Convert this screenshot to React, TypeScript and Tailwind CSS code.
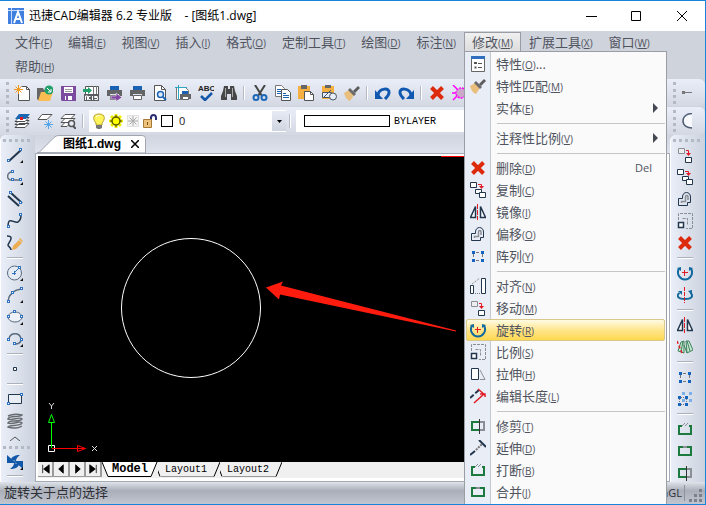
import type { ReactNode } from "react";

const NAVY = "#22364d";
const BLUE = "#1b62b5";
const RED = "#e01b24";
const GREEN = "#1d7a3e";
const GRAY = "#8a8f96";

const corner = <path d="M16 13v3h-3z" fill="#111" />;
const node = (x: number, y: number) => (
  <rect x={x - 1.5} y={y - 1.5} width="2" height="2" fill="#fff" stroke="#2f72c0" key={`${x}-${y}`} />
);
const eraseX = <path d="M2.500 2.500l11 11M13.500 2.500l-11 11" stroke="#dd2a0a" strokeWidth="4" />;
const brush = (
  <>
    <path d="M0 8l5-3 5 5-4 6c-3-1-5-4-6-8z" fill="#eabf7d" />
    <path d="M4 5l2-2 6 6-2 2z" fill="#6b6b6b" />
    <path d="M9 6l5-5 2 2-5 5z" fill="#5c5c5c" />
  </>
);
const printer = (
  <>
    <path d="M4 1h9v4H4z" fill="#1b62b5" />
    <path d="M1 5h15v6h-3V9H4v2H1z" fill="#626466" />
    <path d="M4.500 10.500h8v4h-8z" fill="#fff" stroke="#626466" />
  </>
);

const icons: Record<string, ReactNode> = {
  newFile: (
    <>
      <path d="M7.500 1.500h5l3 3v11h-11v-7" fill="#fff" stroke="#555" />
      <path d="M12.500 1.500v3h3" fill="none" stroke="#555" />
      <path d="M4.500 0v9M0 4.500h9M1.500 1.500l6 6M7.500 1.500l-6 6" stroke="#f09a20" />
    </>
  ),
  open: (
    <>
      <path d="M0 3h6l1 2h6v11H2L0 14z" fill="#666" />
      <path d="M4 7h12l-3 9H1z" fill="#fbbd52" />
      <circle cx="12" cy="5" r="4.500" fill="#22a06b" />
      <path d="M10 3l4 4M14 4v3h-3" stroke="#fff" fill="none" />
    </>
  ),
  save: (
    <>
      <path d="M1 1h15v15H2l-1-1z" fill="#7a4b9e" />
      <path d="M4 2h9v6H4zM5 11h7v4H5z" fill="#fff" />
      <path d="M5 4.500h7M5 6.500h7" stroke="#9a9a9a" />
      <path d="M6 11h2v4H6z" fill="#7a4b9e" />
    </>
  ),
  acis: (
    <>
      <path d="M2.500 1.500h13v8h-13z" fill="#fff" stroke="#555" />
      <path d="M10.500 1v8M13.500 1v8" stroke="#777" />
      <path d="M0 4h5V2l4 3.500L5 9V7H0z" fill="#22a06b" />
      <path d="M1 9h15v7H1z" fill="#5a5c60" />
      <path d="M2.500 15v-4h2v4M7.500 11.500h-2v3h2M9.500 11v4M14.500 11.500h-3v1h3v2h-3" stroke="#fff" fill="none" />
    </>
  ),
  exportPrint: (
    <>
      {printer}
      <path d="M5 11h5V8l6 4.500-6 4V14H5z" fill="#8345a5" stroke="#fff" strokeWidth=".5" />
    </>
  ),
  print: printer,
  preview: (
    <>
      <path d="M2.500 .5h7l4 4v11h-11z" fill="#fff" stroke="#555" />
      <path d="M9.500 .5v4h4" fill="none" stroke="#555" />
      <circle cx="8.500" cy="9.500" r="3" fill="#dbe8f7" stroke={BLUE} strokeWidth="1.500" />
      <path d="M11 12l3 3" stroke={BLUE} strokeWidth="2" />
    </>
  ),
  plot: (
    <>
      <path d="M1.500 2.500h9l3 3v9h-12z" fill="#fff" stroke="#777" />
      <path d="M3.500 0v15M0 2.500h12" stroke="#2fa6bd" />
      <path d="M7 6h6v3H7z" fill={BLUE} />
      <path d="M5 9h11v5H5z" fill="#626466" />
      <path d="M7.500 11.500h6v3h-6z" fill="#fff" stroke="#626466" />
    </>
  ),
  spell: (
    <>
      <path d="M3 11l4 4 7-7" fill="none" stroke="#1156a8" strokeWidth="2.500" />
      <text x="0" y="6" fontSize="8" fontWeight="700" fill="#222" className="font-['Liberation_Sans',sans-serif]">ABC</text>
    </>
  ),
  find: (
    <>
      <path d="M3 1h4v3h2V1h4l1 5 2 5v4h-6V9H6v6H0v-4l2-5z" fill="#474747" />
      <path d="M4.500 3v9M11.500 3v9" stroke="#aaa" />
    </>
  ),
  cut: (
    <>
      <path d="M3 0l7 11M13 0L6 11" stroke="#454545" strokeWidth="2" />
      <circle cx="4" cy="12.500" r="2.500" fill="none" stroke="#1b67b8" strokeWidth="2" />
      <circle cx="12" cy="12.500" r="2.500" fill="none" stroke="#1b67b8" strokeWidth="2" />
    </>
  ),
  copyDoc: (
    <>
      <path d="M.5 .5h6l3 3v8h-9z" fill="#fff" stroke="#777" />
      <path d="M2 4.500h4M2 6.500h4M2 8.500h4" stroke={BLUE} />
      <path d="M6.500 4.500h6l3 3v8h-9z" fill="#fff" stroke="#555" />
      <path d="M8 8.500h3M8 10.500h6M8 12.500h6" stroke={BLUE} />
    </>
  ),
  paste: (
    <>
      <path d="M0 1h12v13H0z" fill="#f5b041" />
      <path d="M3 0h6v4H3z" fill="#666" />
      <path d="M6.500 6.500h6l3 3v6h-9z" fill="#fff" stroke="#555" />
      <path d="M12.500 6.500v3h3" fill="none" stroke="#555" />
    </>
  ),
  pasteShape: (
    <>
      <path d="M1 1h12v13H1z" fill="#f5b041" />
      <path d="M4 0h6v3H4z" fill="#666" />
      <path d="M1.500 7.500h9v5h-9z" fill="#e4ecf5" stroke="#456" />
      <circle cx="12" cy="11.500" r="3.500" fill="#e7eef7" stroke="#456" />
      <path d="M2 13l8-8" stroke="#456" />
    </>
  ),
  brush,
  undo: (
    <>
      <path d="M3 10c1-7 12-8 11-2-.5 3-2 4-4 6" fill="none" stroke="#1159b0" strokeWidth="3" />
      <path d="M0 5v9h8z" fill="#1159b0" />
    </>
  ),
  redo: (
    <>
      <path d="M13 10C12 3 1 2 2 8c.5 3 2 4 4 6" fill="none" stroke="#1159b0" strokeWidth="3" />
      <path d="M16 5v9H8z" fill="#1159b0" />
    </>
  ),
  erase: eraseX,
  purge: (
    <>
      <circle cx="9" cy="8" r="5" fill="#c9a8c9" stroke="#f0f" strokeWidth="1.500" strokeDasharray="2 1" />
      <path d="M1 0l4 4M1 15l4-4M0 8h4" stroke="#f0f" strokeWidth="1.500" />
    </>
  ),
  layers: (
    <>
      <path d="M5 10.500h10l-4 4H1zM5 7.500h10l-4 4H1z" fill="#fff" stroke="#4a4d50" />
      <path d="M5 4.500h10l-4 4H1z" fill="#fff" stroke="#4a4d50" />
      <path d="M5 1h11l-4 5H1z" fill="#1b66b3" />
      <path d="M6 4h3v3H6z" fill={RED} />
    </>
  ),
  layerFreeze: (
    <>
      <path d="M5 1.500h10l-5 5H1z" fill="#fff" stroke="#555" />
      <path d="M11.500 7v9M7 11.500h9M8.500 8.500l6 6M14.500 8.500l-6 6" stroke="#55a5ea" />
    </>
  ),
  layerFind: (
    <>
      <path d="M5 1.500h10l-4 4H1zM5 5.500h10l-4 4H1zM5 9.500h6l-4 4H1z" fill="#fff" stroke="#555" />
      <circle cx="11.500" cy="10.500" r="3" fill="#e8edf5" stroke="#555" strokeWidth="1.500" />
      <path d="M13 13l3 3" stroke="#555" strokeWidth="2" />
    </>
  ),
  bulb: (
    <>
      <path d="M8 1C1 1 2 7 5 10v2h6v-2c3-3 4-9-3-9z" fill="#fff45a" stroke="#b5a12c" />
      <path d="M5 12h6v3l-2 1H7l-2-1z" fill="#777" />
      <path d="M5 4c1-1 2-2 4-1" stroke="#fff" fill="none" />
    </>
  ),
  sun: (
    <>
      <path d="M8 1v14M1 8h14M3 3l10 10M13 3L3 13" stroke="#f2ee00" strokeWidth="3" strokeDasharray="3 8" />
      <path d="M8 2v12M2 8h12" stroke="#555000" />
      <circle cx="8" cy="8" r="4" fill="#ff0" stroke="#5b5600" strokeWidth="1.500" />
    </>
  ),
  frozen: (
    <>
      <path d="M2.500 2.500h11v11h-11z" fill="#f4f4f4" stroke="#c9c9c9" strokeDasharray="1 1" />
      <path d="M8 3v10M3 8h10M4.500 4.500l7 7M11.500 4.500l-7 7" stroke="#aaa" />
    </>
  ),
  lock: (
    <>
      <path d="M9 7V5c0-4 5-4 5 0v2" fill="none" stroke="#2c2c77" strokeWidth="2" />
      <path d="M1.500 6.500h8v8h-8z" fill="#edc27a" stroke="#a77b35" />
      <path d="M5 9h1v3H5z" fill="#78551e" />
    </>
  ),
  line: <><path d="M2 14L14 3" stroke={NAVY} strokeWidth="2" />{node(2, 14)}{node(14, 3)}{corner}</>,
  polyline: <><path d="M6 3C-1 2-1 12 5 11h9" fill="none" stroke="#66727e" strokeWidth="1.500" />{node(6, 3)}{node(6, 11)}{node(14, 11)}{corner}</>,
  doubleLine: <><path d="M4 2l11 10M1 5l11 10" stroke={NAVY} strokeWidth="2" />{node(4, 2)}{node(14, 12)}</>,
  spline: <><path d="M1 14c0-12 6-3 10-5 3-2 3-4 3-7" fill="none" stroke={NAVY} strokeWidth="1.500" />{node(2, 14)}{node(14, 2)}</>,
  freehand: (
    <>
      <path d="M0 1c8 0 2 6 1 9 0 2 3 2 3 5" fill="none" stroke={NAVY} strokeWidth="1.500" />
      <path d="M5 15l1-4 6-6 3 3-6 6z" fill="#edac4e" />
      <path d="M12 4l1-1 3 3-1 1z" fill="#edac4e" />
    </>
  ),
  circle: <><circle cx="7.500" cy="8" r="7" fill="#e4ebf5" stroke="#586a7e" /><path d="M7 8l5-5M5 8.500h4M7.500 6v4" stroke="#2f72c0" />{node(13, 3)}{corner}</>,
  arc: <><path d="M1 14C2 7 7 3 14 2" fill="none" stroke="#586a7e" strokeWidth="1.500" />{node(2, 15)}{node(6, 6)}{node(15, 2)}{corner}</>,
  ellipse: <><ellipse cx="8" cy="8" rx="7" ry="5" fill="#eef2f8" stroke="#586a7e" />{node(2, 8)}{node(8, 3)}{node(15, 8)}{corner}</>,
  ellipseArc: <><path d="M2 8c1-7 11-7 12 0 0 3-2 5-6 5" fill="none" stroke="#586a7e" strokeWidth="1.500" />{node(2, 9)}{node(15, 9)}{node(8, 13)}{corner}</>,
  point: <path d="M6.500 6.500h3v3h-3z" fill="#fff" stroke={NAVY} />,
  rect: <><path d="M1.500 3.500h13v9h-13z" fill="#e9edf4" stroke={NAVY} />{node(2, 13)}{node(15, 4)}</>,
  helix: (
    <path
      d="M1 3c4-2 10-2 14-1-3 3-13 0-14 4 4 2 12-3 14 0-3 4-13 0-14 4 5 2 12-3 14 0-2 4-13 1-14 4 5 2 11 1 14-1"
      fill="none"
      stroke="#686d72"
      strokeWidth="1.500"
    />
  ),
  refresh: (
    <>
      <path d="M4 6c0-3 4-5 9-5-2 2-4 3-4 6zM12 10c0 3-4 5-9 5 2-2 4-3 4-6z" fill="#1159a8" />
      <path d="M0 1v8h9zM16 15V7H7z" fill="#1159a8" />
      {corner}
    </>
  ),
  props: (
    <>
      <path d="M1.500 1.500h13v14h-13z" fill="#fff" stroke="#666" />
      <path d="M1 0h14v3H1z" fill="#2f6fbd" />
      <path d="M4 6h3v2H4zM4.500 10.500h2v2h-2z" fill="#555" />
      <path d="M8 7.500h4M8 11.500h4" stroke="#555" />
    </>
  ),
  copy: (
    <>
      <path d="M.5 .5h6v5h-6z" fill="#fff" stroke={NAVY} />
      <path d="M5.500 7.500h6v4h-6z" fill="#fff" stroke={NAVY} />
      <path d="M9.500 10.500h6v5h-6z" fill="#fff" stroke={NAVY} />
      <path d="M8 2.500h3.500v2" fill="none" stroke={RED} />
      <path d="M9 4h5l-2.500 3z" fill={RED} />
    </>
  ),
  mirror: (
    <>
      <path d="M5.500 2.500v11h-5zM10.500 2.500v11h5z" fill="#fff" stroke={NAVY} strokeWidth="1.500" />
      <path d="M7.500 0v16" stroke={RED} strokeDasharray="5 1" />
    </>
  ),
  offset: (
    <>
      <path d="M1.500 14.500V7.500H5.500V6C5.500 0 13.500 0 13.500 6V11.500h-3v3z" fill="none" stroke={NAVY} />
      <path d="M4.500 12V10.500h4V6c0-2 2.500-2 2.500 0v3" fill="none" stroke={GRAY} strokeWidth="1.500" />
    </>
  ),
  array: (
    <>
      <path d="M6 4.500h4M6 12.500h4M3.500 6v4M12.500 6v4" stroke="#777" strokeDasharray="3 1" />
      <path d="M2 3h3v3H2zM11 3h3v3h-3zM2 11h3v3H2zM11 11h3v3h-3z" fill="#1565c0" />
    </>
  ),
  align: (
    <>
      <path d="M.5 7.500h3v8h-3zM11.500 .5h4v15h-4z" fill="#fff" stroke={NAVY} />
      <path d="M2 6l8-6M5 15.500h6" stroke="#777" strokeDasharray="1 1" />
    </>
  ),
  move: (
    <>
      <path d="M1.500 1.500h6v5h-6z" fill="#eee" stroke={GRAY} />
      <path d="M8.500 10.500h6v5h-6z" fill="#fff" stroke={NAVY} />
      <path d="M9 3.500h2.500v3" fill="none" stroke={RED} />
      <path d="M9 6h5l-2.500 3z" fill={RED} />
    </>
  ),
  rotate: (
    <>
      <path d="M2 3.500C-1 9 3 14.500 8 14.500s9-5.500 6-11" fill="none" stroke="#12699d" strokeWidth="2" />
      <path d="M0 3l4-1v4zM12 2l4 1-4 3z" fill="#12699d" />
      <path d="M5 7.500h6M7.500 5v6" stroke={RED} />
    </>
  ),
  rotate3d: (
    <>
      <path d="M2.500 6c-4 3-1 6 5.500 6s9-3 5.500-6" fill="none" stroke="#12699d" strokeWidth="2" />
      <path d="M1 4h4v4zM11 4l4-1v5z" fill="#12699d" />
      <path d="M7.500 0v16" stroke={RED} strokeDasharray="4 1" />
    </>
  ),
  scale: (
    <>
      <path d="M1.500 7V.5h14v15H9M5.500 5.500h5V12" fill="none" stroke={GRAY} strokeDasharray="3 1" />
      <path d="M1.500 9.500h5v5h-5z" fill="#fff" stroke={NAVY} strokeWidth="1.500" />
    </>
  ),
  stretch: (
    <>
      <path d="M10 4l5 9.500h-5" fill="none" stroke={GRAY} />
      <path d="M1.500 2.500h7v11h-7z" fill="#fff" stroke={NAVY} />
    </>
  ),
  lengthen: (
    <>
      <path d="M0 10l9-8" stroke={NAVY} strokeWidth="2" strokeDasharray="5 2" />
      <path d="M4 15l10-9M8 1l7 6M10 6h5v3" fill="none" stroke={RED} strokeWidth="1.500" />
    </>
  ),
  mirror3d: (
    <>
      <path d="M4 3l3-1v12l-6-2zM9 2h3l4 9-6 3z" fill="#c5e5d2" stroke="#40845c" />
      <path d="M6 2l-2 11M10 2l3 10M7 6l3 8" stroke="#40845c" />
      <path d="M0 2l5 12" stroke={RED} strokeWidth="1.500" strokeDasharray="3 2" />
    </>
  ),
  array3d: (
    <>
      <path d="M5 1h3v3H5zM12 1h3v3h-3zM12 8h3v3h-3zM5 8h3v3H5z" fill="#7db0e8" />
      <path d="M1 5h3v3H1zM8 5h3v3H8zM1 12h3v3H1zM8 12h3v3H8z" fill="#1565c0" />
      <path d="M4 6.500h4M4 13.500h4M2.500 8v4M9.500 8v4" stroke="#777" strokeDasharray="1 1" />
    </>
  ),
  trim: (
    <>
      <path d="M9 4h5v8H9" fill="none" stroke={GRAY} strokeWidth="2" />
      <path d="M9 4H2v8h7" fill="none" stroke={GREEN} strokeWidth="2" />
      <path d="M9.500 1v15" stroke="#333" />
    </>
  ),
  extend: (
    <>
      <path d="M0 15l5-4" stroke={NAVY} strokeWidth="2" />
      <path d="M6 10l6-6" stroke="#777" strokeWidth="2" strokeDasharray="2 1" />
      <path d="M9 0l7 7" stroke={NAVY} strokeWidth="2" />
    </>
  ),
  breakIt: (
    <>
      <path d="M5 5H2v8h12V5h-2" fill="none" stroke={GREEN} strokeWidth="2" />
      <path d="M5 5l3-3M8 5l3-3" stroke={GRAY} />
    </>
  ),
  join: (
    <>
      <path d="M6 4H2v8h12V4h-4" fill="none" stroke={GREEN} strokeWidth="2" />
      <path d="M6 4h4" stroke={GRAY} strokeWidth="2" />
    </>
  ),
  ray: <><path d="M3 7.500h13" stroke="#777" /><path d="M0 6h3v3H0z" fill="#777" /></>,
  bigArc: <path d="M16 1C4-1 1 4 1 8s3 8 15 7z" fill="#f7f9fc" stroke="#4d5c73" strokeWidth="1.500" />,
};

function Icon({ name }: { name: string }) {
  return (
    <svg width="16" height="16" viewBox="0 0 16 16" className="shrink-0" aria-hidden="true">
      {icons[name]}
    </svg>
  );
}

function Label({ text, hot, tail = "" }: { text: string; hot: string; tail?: string }) {
  return (
    <span className="whitespace-nowrap">
      {text}
      <span className="text-[10px]">
        (<u>{hot}</u>)
      </span>
      {tail}
    </span>
  );
}

function Divider() {
  return <span className="mx-[3px] h-3.5 w-0.5 shrink-0 border-r border-white bg-[#b4bac6]" />;
}

function GripV() {
  return <span className="ml-1.5 h-[22px] w-[3px] shrink-0 border-l-[3px] border-dotted border-[#b4bac5]" />;
}

function ToolButton({ name }: { name: string }) {
  return (
    <button type="button" aria-label={name} className="flex h-6 w-[23px] shrink-0 items-center pl-1">
      <Icon name={name} />
    </button>
  );
}

const standardGroups = [
  ["newFile", "open", "save", "acis", "exportPrint", "print", "preview", "plot", "spell", "find"],
  ["cut", "copyDoc", "paste", "pasteShape", "brush"],
  ["undo", "redo"],
  ["erase", "purge"],
];

const menus: [string, string][] = [
  ["文件", "F"],
  ["编辑", "E"],
  ["视图", "V"],
  ["插入", "I"],
  ["格式", "O"],
  ["定制工具", "T"],
  ["绘图", "D"],
  ["标注", "N"],
  ["修改", "M"],
  ["扩展工具", "X"],
  ["窗口", "W"],
  ["帮助", "H"],
];

type Item = { icon?: string; text: string; hot: string; tail?: string; key?: string; sub?: boolean; active?: boolean };

const modifyMenu: Item[][] = [
  [
    { icon: "props", text: "特性", hot: "O", tail: "..." },
    { icon: "brush", text: "特性匹配", hot: "M" },
    { text: "实体", hot: "E", sub: true },
  ],
  [{ text: "注释性比例", hot: "V", sub: true }],
  [
    { icon: "erase", text: "删除", hot: "D", key: "Del" },
    { icon: "copy", text: "复制", hot: "C" },
    { icon: "mirror", text: "镜像", hot: "I" },
    { icon: "offset", text: "偏移", hot: "O" },
    { icon: "array", text: "阵列", hot: "Y" },
  ],
  [
    { icon: "align", text: "对齐", hot: "N" },
    { icon: "move", text: "移动", hot: "M" },
    { icon: "rotate", text: "旋转", hot: "R", active: true },
    { icon: "scale", text: "比例", hot: "S" },
    { icon: "stretch", text: "拉伸", hot: "H" },
    { icon: "lengthen", text: "编辑长度", hot: "L" },
  ],
  [
    { icon: "trim", text: "修剪", hot: "T" },
    { icon: "extend", text: "延伸", hot: "D" },
    { icon: "breakIt", text: "打断", hot: "B" },
    { icon: "join", text: "合并", hot: "J" },
  ],
];

function ModifyMenu() {
  return (
    <div
      role="menu"
      className="absolute top-[19px] left-0 z-10 w-[203px] border border-[#9a9da3] bg-linear-to-r from-[#e9edf6] from-[25px] to-[#fafafa] to-[25px] px-px pt-px pb-4"
    >
      <span className="absolute inset-y-0 left-[25px] w-px bg-[#c5c8ce]" />
      {modifyMenu.map((group, g) => (
        <div key={g} className="relative">
          {g > 0 && (
            <div className="flex h-2 items-center pl-[31px]">
              <span className="h-px w-full bg-[#c5c5c5]" />
            </div>
          )}
          {group.map((item) => (
            <button
              key={item.text}
              type="button"
              role="menuitem"
              className={`flex h-[22px] w-full items-center rounded-xs border pr-1 text-left ${
                item.active
                  ? "border-[#d9c88c] bg-linear-to-b from-[#fffbe2] via-[#ffe58b] via-50% to-[#ffd84c]"
                  : "border-transparent"
              }`}
            >
              <span className="mr-[7px] flex w-[22px] shrink-0 justify-center">
                {item.icon && <Icon name={item.icon} />}
              </span>
              <span className="grow">
                <Label text={item.text} hot={item.hot} tail={item.tail} />
              </span>
              {item.key && <span className="pr-2 text-[11px]">{item.key}</span>}
              {item.sub && (
                <svg width="6" height="10" viewBox="0 0 6 10" className="mr-px" aria-hidden="true">
                  <path d="M0 0v10l5-5z" fill="#434852" />
                </svg>
              )}
            </button>
          ))}
        </div>
      ))}
    </div>
  );
}

function MenuBar() {
  return (
    <nav className="flex h-12 shrink-0 flex-wrap content-start gap-y-1 bg-[#cfd3dc] pt-px pr-3 pl-[7px] text-[13px] leading-5 text-[#50545f]">
      {menus.map(([text, hot]) =>
        text === "修改" ? (
          <div key={text} className="relative h-5">
            <button
              type="button"
              aria-expanded="true"
              className="h-5 border border-b-0 border-[#9a9da3] bg-linear-to-b from-[#f0f0f0] to-[#dcdcdc] px-[7px] leading-[18px]"
            >
              <Label text={text} hot={hot} />
            </button>
            <ModifyMenu />
          </div>
        ) : (
          <button key={text} type="button" className="h-5 px-2">
            <Label text={text} hot={hot} />
          </button>
        ),
      )}
    </nav>
  );
}

const barStyle = "flex items-center rounded-r-md bg-linear-to-b from-[#e9eef8] to-[#d3d8e3]";

function Toolbars() {
  return (
    <div className="flex shrink-0 flex-col gap-px bg-[#cfd3dc]">
      <div className="flex h-[27px]">
        <div className={`${barStyle} min-w-0 grow overflow-hidden`}>
          <GripV />
          <span className="w-px shrink-0" />
          {standardGroups.map((group, g) => (
            <div key={g} className="mt-0.5 flex shrink-0 items-center self-start">
              {g > 0 && <Divider />}
              {group.map((name) => (
                <ToolButton key={name} name={name} />
              ))}
            </div>
          ))}
        </div>
        <div className={`${barStyle} w-[38px] shrink-0`}>
          <GripV />
          <button type="button" aria-label="射线" className="mt-1.5 ml-1.5 w-2.5 self-start overflow-hidden">
            <Icon name="ray" />
          </button>
        </div>
      </div>
      <div className="flex h-7">
        <div className={`${barStyle} min-w-0 grow overflow-hidden`}>
          <GripV />
          <span className="w-px shrink-0" />
          <ToolButton name="layers" />
          <ToolButton name="layerFreeze" />
          <ToolButton name="layerFind" />
          <Divider />
          <div className="ml-0.5 flex h-[22px] w-[197px] shrink-0 items-center bg-white pl-0.5">
            <span className="flex w-[86px] shrink-0 items-center gap-px">
              {["bulb", "sun", "frozen", "lock"].map((n) => (
                <Icon key={n} name={n} />
              ))}
              <span className="ml-0.5 size-3 border border-black bg-white" />
            </span>
            <select aria-label="图层" className="h-full grow appearance-none bg-transparent pl-0.5 text-[11px] text-[#222] outline-none">
              <option>0</option>
            </select>
            <span className="pointer-events-none flex h-5 w-3.5 items-center justify-center bg-linear-to-b from-[#e6eaf3] to-[#cfd5e0]">
              <svg width="5" height="3" viewBox="0 0 5 3" aria-hidden="true">
                <path d="M0 0h5L2.500 3z" fill="#000" />
              </svg>
            </span>
          </div>
          <Divider />
          <div className="ml-0.5 flex h-[22px] w-[200px] shrink-0 items-center gap-1 bg-white pl-2">
            <span className="h-3 w-[86px] shrink-0 border border-black" />
            <select aria-label="颜色" className="h-full grow appearance-none bg-transparent font-['Liberation_Mono',monospace] text-[10px] text-black outline-none">
              <option>BYLAYER</option>
            </select>
          </div>
        </div>
        <div className={`${barStyle} w-[38px] shrink-0`}>
          <GripV />
          <button type="button" aria-label="圆弧" className="ml-1.5 w-2.5 overflow-hidden">
            <Icon name="bigArc" />
          </button>
        </div>
      </div>
    </div>
  );
}

function Dock({ groups, children }: { groups: string[][]; children?: ReactNode }) {
  return (
    <aside className="flex w-[35px] shrink-0 flex-col overflow-hidden rounded-t-md border-l border-white bg-linear-to-r from-[#e9eef8] to-[#cdd3de] pt-1">
      <span className="mb-0.5 ml-0.5 w-[27px] shrink-0 border-t-[3px] border-dotted border-[#b4bac5]" />
      {groups.map((group, g) => (
        <div key={g} className="w-7 shrink-0">
          {g > 0 && <span className="mx-auto my-[3px] block h-0.5 w-4 border-b border-white bg-[#aab0bc]" />}
          {group.map((name) => (
            <button key={name} type="button" aria-label={name} className="flex h-[22px] w-full items-center justify-center">
              <Icon name={name} />
            </button>
          ))}
        </div>
      ))}
      {children}
    </aside>
  );
}

const leftGroups = [
  ["line", "polyline", "doubleLine", "spline", "freehand"],
  ["circle", "arc", "ellipse", "ellipseArc"],
  ["point"],
  ["rect", "helix"],
];
const rightGroups = [
  ["move", "copy", "offset", "scale", "erase"],
  ["rotate", "rotate3d"],
  ["mirror", "mirror3d"],
  ["array", "array3d"],
  ["breakIt", "join", "trim"],
];

function Drawing() {
  return (
    <div className="relative min-h-0 grow overflow-hidden bg-black">
      <svg className="absolute inset-0 size-full" aria-hidden="true">
        <path d="M403 .5h240" stroke="#f00" />
        <circle cx="153" cy="152" r="69.500" fill="none" stroke="#fff" />
        <path d="M228 131.500l17-6-2 4 175 45v1L242 138.500l-1 5z" fill="#ff1c0f" />
      </svg>
      <svg width="64" height="64" viewBox="0 0 64 64" className="absolute bottom-0 left-0" aria-hidden="true">
        <path d="M10.500 47.500h6v6h-6z" fill="none" stroke="#fff" />
        <path d="M13.500 50V24M10.500 24.500l3-8 3 8z" fill="none" stroke="#0f0" />
        <path d="M14 50.500h34M39.500 47.500l8 3-8 3z" fill="none" stroke="#f00" />
        <path d="M11 5l2.500 3L16 5M13.500 8v3M54 48l5 5M59 48l-5 5" fill="none" stroke="#ddd" />
      </svg>
    </div>
  );
}

const navArrows = [
  "M5 3v9M12 3v9L6 7.500z",
  "M10 3v9L5 7.500z",
  "M6 3v9l5-4.500z",
  "M4 3v9l6-4.500zM11 3v9",
];

function LayoutTabs() {
  return (
    <div className="flex h-4 shrink-0 bg-[#f0f0f0] font-['Liberation_Mono',monospace] text-[10px] text-black">
      {navArrows.map((d) => (
        <button key={d} type="button" aria-label="切换布局" className="h-[15px] w-4 shrink-0 border-r-2 border-b border-[#9b9b9b]">
          <svg width="14" height="14" viewBox="0 0 15 15" aria-hidden="true">
            <path d={d} fill="#000" stroke="#000" strokeWidth=".8" />
          </svg>
        </button>
      ))}
      <div className="relative flex h-[15px] w-14 items-center justify-center">
        <svg width="56" height="15" viewBox="0 0 56 15" className="absolute inset-0" aria-hidden="true">
          <path d="M0 0l6 14.500h43L55 0z" fill="#fff" />
          <path d="M0 0l6 14.500h43L55 0" fill="none" stroke="#000" />
        </svg>
        <button type="button" className="relative text-xs leading-[15px] font-bold">Model</button>
      </div>
      {["Layout1", "Layout2"].map((name) => (
        <div key={name} className="relative flex h-[15px] w-[62px] items-center justify-center pr-1.5">
          <svg width="62" height="15" viewBox="0 0 62 15" className="absolute inset-0" aria-hidden="true">
            <path d="M3 14.500h53" stroke="#999" />
            <path d="M-2 4l4 10.500M56 14.500L62 0" stroke="#000" />
          </svg>
          <button type="button" className="relative leading-[15px]">{name}</button>
        </div>
      ))}
    </div>
  );
}

export default function App() {
  return (
    <div className="flex h-screen w-full flex-col overflow-hidden border-t border-r border-b border-[#1883d7] bg-[#cfd3dc] font-['Open_Sans','Noto_Sans_CJK_SC',sans-serif]">
      <header className="flex h-[30px] shrink-0 items-center bg-white pl-2 text-xs text-black">
        <svg width="16" height="16" viewBox="0 0 16 16" aria-hidden="true">
          <path d="M0 0h16v16H0z" fill="#3f7fe0" />
          <path d="M0 2.500h16M3.500 0v16" stroke="#c7dbff" />
          <path d="M6 15l4-11 4 11M8 11h4" fill="none" stroke="#fff" strokeWidth="2" />
        </svg>
        <h1 className="ml-[5px] grow whitespace-pre">迅捷CAD编辑器 6.2 专业版{"    "}- [图纸1.dwg]</h1>
        <div className="flex">
          <button type="button" aria-label="最小化" className="flex h-7 w-[45px] items-center justify-center">
            <svg width="11" height="11" aria-hidden="true"><path d="M0 5.500h11" stroke="#000" /></svg>
          </button>
          <button type="button" aria-label="最大化" className="flex h-7 w-[45px] items-center justify-center">
            <svg width="11" height="11" aria-hidden="true"><path d="M.5 .5h9v9h-9z" fill="none" stroke="#000" /></svg>
          </button>
          <button type="button" aria-label="关闭" className="flex h-7 w-[46px] items-center justify-center">
            <svg width="10" height="10" aria-hidden="true"><path d="M0 0l10 10M10 0L0 10" stroke="#000" /></svg>
          </button>
        </div>
      </header>
      <MenuBar />
      <Toolbars />
      <div className="flex min-h-0 grow">
        <Dock groups={leftGroups}>
          <span className="flex h-3 w-7 shrink-0 items-center justify-center">
            <svg width="10" height="5" aria-hidden="true"><path d="M0 5l5-4 5 4" fill="none" stroke="#555" /></svg>
          </span>
          <span className="mt-0.5 ml-0.5 w-[27px] shrink-0 border-t-[3px] border-dotted border-[#b4bac5]" />
          <button type="button" aria-label="重生成" className="flex h-[22px] w-7 shrink-0 items-center justify-center pt-1">
            <Icon name="refresh" />
          </button>
          <span className="mt-1 ml-1.5 h-0.5 w-4 shrink-0 border-b border-white bg-[#aab0bc]" />
        </Dock>
        <main className="flex min-w-0 grow flex-col">
          <div className="flex h-[18px] shrink-0 bg-linear-to-b from-[#cfd4de] to-[#dde2ec] pl-0.5">
            <div className="relative flex h-[18px] w-[109px] items-center pl-[26px]">
              <svg width="109" height="18" viewBox="0 0 109 18" className="absolute inset-0" aria-hidden="true">
                <path d="M0 17.500h2L17 2.500q2-2 5-2h83q3.500 0 3.500 3V18z" fill="#fff" stroke="#a0a5b0" />
              </svg>
              <button type="button" className="relative font-['Liberation_Sans','Noto_Sans_CJK_SC',sans-serif] text-xs leading-4 font-bold text-black">
                图纸1.dwg
              </button>
              <button type="button" aria-label="关闭图纸" className="relative ml-2.5">
                <svg width="8" height="8" aria-hidden="true"><path d="M0 0l8 8M8 0L0 8" stroke="#000" strokeWidth="1.500" /></svg>
              </button>
            </div>
          </div>
          <div className="flex min-h-0 grow flex-col border border-[#a4aab6] bg-white px-0.5 pt-0.5 pb-[3px]">
            <Drawing />
            <LayoutTabs />
          </div>
        </main>
        <Dock groups={rightGroups} />
      </div>
      <footer className="flex h-[22px] shrink-0 items-center bg-linear-to-b from-[#dfe3ea] via-[#a9aeb9] via-40% to-[#c2c6cf] pl-1 text-[13px] text-[#2e3036]">
        <span className="grow">旋转关于点的选择</span>
        <span className="border-r border-[#8d929c] pr-0.5 text-[11px]">OpenGL</span>
        <svg width="18" height="18" viewBox="0 0 18 18" className="mt-1 ml-0.5" aria-hidden="true">
          <path d="M12 3h3v3h-3zM12 8h3v3h-3zM7 8h3v3H7zM12 13h3v3h-3zM7 13h3v3H7zM2 13h3v3H2z" fill="#7b8089" />
        </svg>
      </footer>
    </div>
  );
}
